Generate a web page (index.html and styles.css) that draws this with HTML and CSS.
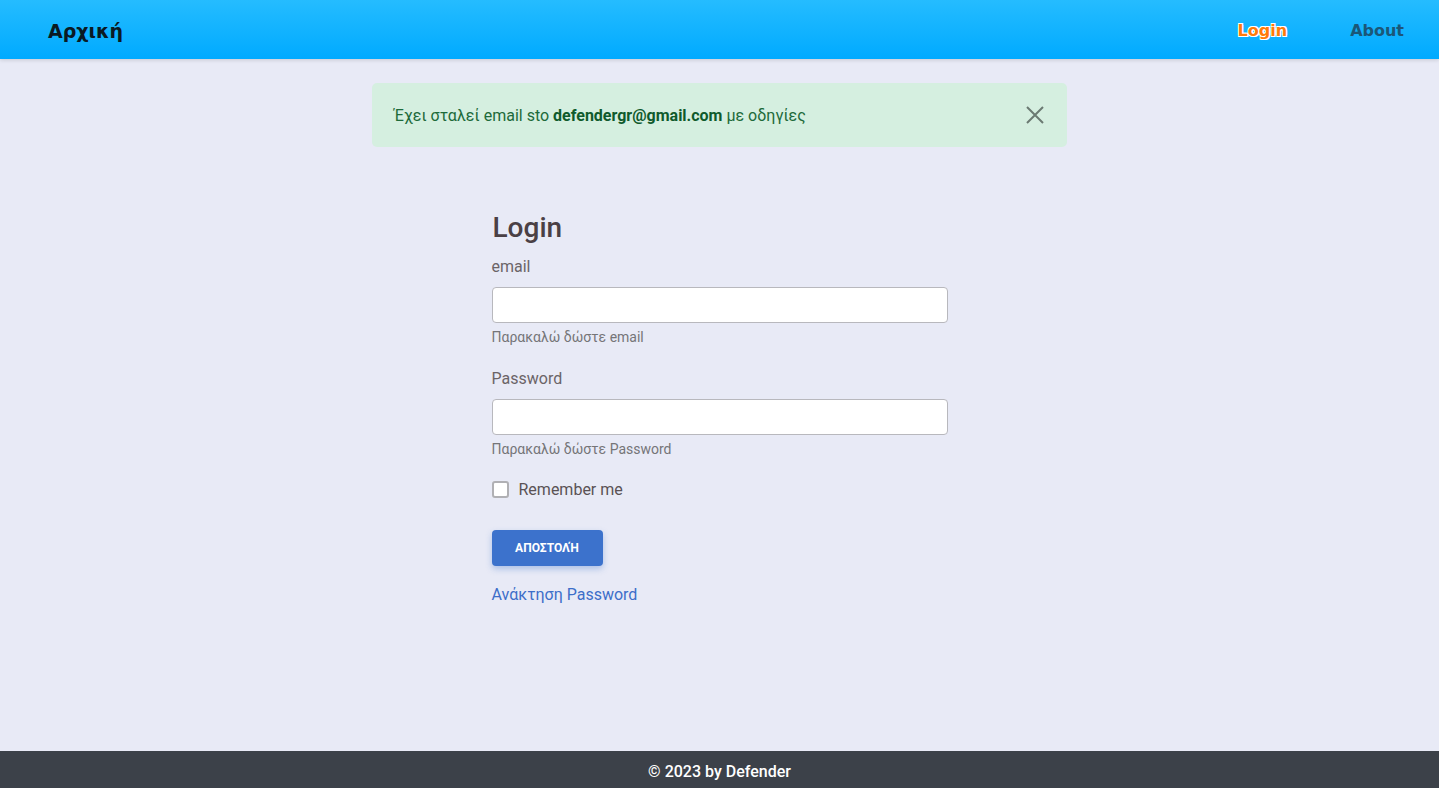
FILE: index.html
```html
<!DOCTYPE html>
<html lang="el">
<head>
    <meta charset="UTF-8">
    <meta name="viewport" content="width=device-width, initial-scale=1.0">
    <title>Login</title>
    <link rel="stylesheet" href="styles.css">
</head>
<body>

    <header class="topbar">
        <a class="brand" href="#">Αρχική</a>
        <nav class="nav">
            <a class="nav-link active" href="#">Login</a>
            <a class="nav-link" href="#">About</a>
        </nav>
    </header>

    <main class="content">
        <!-- Message -->
        <div class="alert">
            <span>Έχει σταλεί email sto <strong>defendergr@gmail.com</strong> με οδηγίες</span>
            <button class="alert-close" type="button" aria-label="Close">
                <svg width="18" height="18" viewBox="0 0 18 18">
                    <path d="M1 1 L17 17 M17 1 L1 17" stroke="#6b7a72" stroke-width="2" fill="none"/>
                </svg>
            </button>
        </div>

        <!-- Login form -->
        <form class="login-form">
            <h2 class="form-title">Login</h2>

            <label class="field-label" for="email">email</label>
            <input class="field-input" type="email" id="email" name="email">
            <div class="field-help">Παρακαλώ δώστε email</div>

            <label class="field-label" for="password">Password</label>
            <input class="field-input" type="password" id="password" name="password">
            <div class="field-help">Παρακαλώ δώστε Password</div>

            <label class="check">
                <input type="checkbox" id="remember"> <span>Remember me</span>
            </label>

            <button class="submit-btn" type="submit">ΑΠΟΣΤΟΛΉ</button>

            <a class="recover" href="#">Ανάκτηση Password</a>
        </form>
    </main>

    <footer class="footer">© 2023 by Defender</footer>

</body>
</html>
```

FILE: styles.css
```css
html, body {
    height: 100%;
}
body {
    margin: 0;
    font-family: Roboto, "Noto Sans", sans-serif;
    background-color: #e8eaf6;
    display: flex;
    flex-direction: column;
}
.topbar {
    height: 59px;
    background: linear-gradient(to bottom, #25bcff, #00aaff);
    box-shadow: 0 1px 4px rgba(0, 0, 0, 0.15);
    display: flex;
    align-items: center;
    justify-content: space-between;
    padding: 0 35px 0 48px;
    flex-shrink: 0;
}
.brand {
    font-family: "DejaVu Sans", Verdana, sans-serif;
    font-weight: bold;
    font-size: 19px;
    color: #0a1a24;
    text-decoration: none;
    margin-top: 2px;
}
.nav {
    display: flex;
    gap: 63px;
    margin-top: 2px;
}
.nav-link {
    font-family: "DejaVu Sans", Verdana, sans-serif;
    font-weight: bold;
    font-size: 16px;
    color: #1b5778;
    text-decoration: none;
}
.nav-link.active {
    color: #ff7a0a;
    text-shadow: 1px 1px 0 #fff, -1px -1px 0 #fff, 1px -1px 0 #fff, -1px 1px 0 #fff;
}
.content {
    flex: 1;
    display: flex;
    flex-direction: column;
    align-items: center;
}
.alert {
    width: 695px;
    box-sizing: border-box;
    margin-top: 24px;
    height: 64px;
    padding: 0 22px;
    background-color: #d5efe0;
    color: #1d6a3a;
    border-radius: 5px;
    font-size: 16px;
    display: flex;
    align-items: center;
    justify-content: space-between;
}
.alert strong {
    color: #0f5a2c;
}
.alert-close {
    background: none;
    border: none;
    padding: 0;
    cursor: pointer;
    display: flex;
    margin-right: 1px;
}
.login-form {
    width: 456px;
    margin-top: 64px;
    display: flex;
    flex-direction: column;
    align-items: flex-start;
}
.form-title {
    margin: 0 0 0 1px;
    font-size: 28px;
    font-weight: 500;
    color: #4a4045;
    line-height: 34px;
}
.field-label {
    margin-top: 12px;
    font-size: 16px;
    color: #6b6467;
    line-height: 19px;
}
.field-input {
    width: 100%;
    box-sizing: border-box;
    height: 36px;
    margin-top: 11px;
    border: 1px solid #b8b8bd;
    border-radius: 4px;
    background: #fff;
    padding: 6px 10px;
    font-size: 16px;
}
.field-help {
    margin-top: 6px;
    font-size: 14px;
    color: #757578;
    line-height: 16px;
    margin-bottom: 14px;
}
.field-help + .field-label {
    margin-top: 10px;
}
.check {
    display: flex;
    align-items: center;
    gap: 10px;
    font-size: 16px;
    color: #5a5255;
    margin-top: 9px;
}
.check input {
    margin: 0;
    width: 17px;
    height: 17px;
    appearance: none;
    border: 2px solid #b0b0b4;
    border-radius: 3px;
    background: #fff;
}
.submit-btn {
    margin-top: 31px;
    width: 111px;
    height: 36px;
    border: none;
    border-radius: 4px;
    background-color: #3c72cc;
    color: #fff;
    font-family: Roboto, sans-serif;
    font-weight: bold;
    font-size: 12px;
    box-shadow: 0 3px 6px rgba(60, 114, 204, 0.35);
    cursor: pointer;
}
.recover {
    margin-top: 19px;
    font-size: 16px;
    color: #3d6ec9;
    text-decoration: none;
}
.footer {
    flex-shrink: 0;
    height: 37px;
    box-sizing: border-box;
    padding-top: 3px;
    background-color: #3c4149;
    color: #fff;
    font-weight: 500;
    font-size: 16px;
    display: flex;
    align-items: center;
    justify-content: center;
}
```
